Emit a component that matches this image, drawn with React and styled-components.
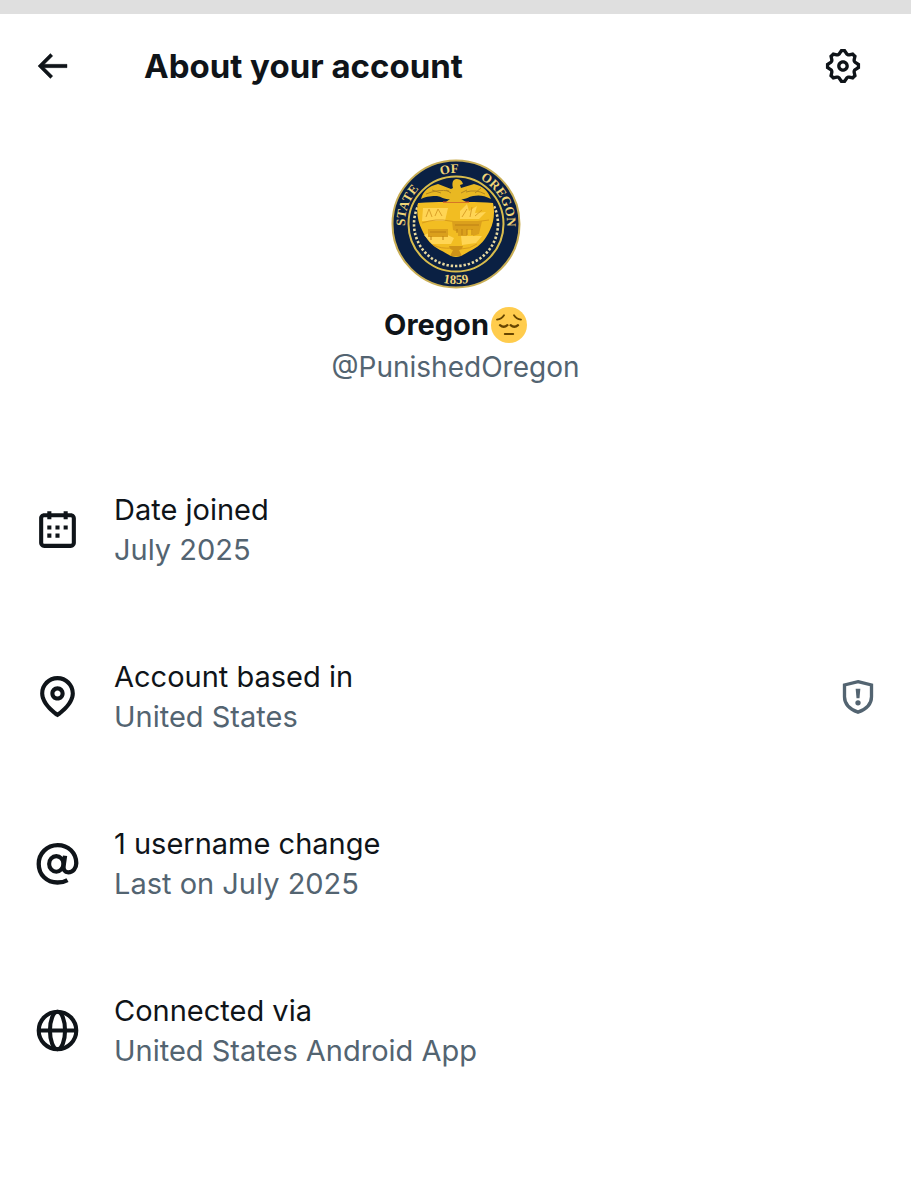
import styled, { createGlobalStyle } from "styled-components";

const GlobalStyle = createGlobalStyle`
    :root {
        --text: #0f1419;
        --textLight: #536471;
        --body: #ffffff;
        --statusBar: #dfdfdf;
        --navy: #0a2043;
        --gold: #e9b822;
    }

    body {
        margin: 0;
        background-color: var(--body);
        color: var(--text);
        font-family: Inter, "Liberation Sans", sans-serif;
    }
`

const StatusBar = styled.div`
    height: 14px;
    background-color: var(--statusBar);
`

const Header = styled.header`
    display: flex;
    align-items: center;
    height: 104px;
    padding: 0 48px 0 32px;
`

const Title = styled.h1`
    flex: 1;
    margin: 0 0 0 72px;
    font-size: 33px;
    font-weight: 700;
    line-height: 40px;
`

const IconButton = styled.button`
    display: flex;
    padding: 0;
    border: none;
    background: none;
    color: ${({ $muted }) => $muted ? "var(--textLight)" : "var(--text)"};
    cursor: pointer;
`

const Icon = styled.svg`
    flex: none;
    width: ${({ $size }) => $size}px;
    height: ${({ $size }) => $size}px;
    fill: currentColor;
`

const Line = styled(Icon)`
    fill: none;
    stroke: currentColor;
    stroke-width: 2;
`

const Profile = styled.section`
    display: flex;
    flex-direction: column;
    align-items: center;
    padding: 41px 0 58px;
`

const Seal = styled.svg`
    width: 130px;
    height: 130px;
    margin-bottom: 15px;
    font-family: "Liberation Serif", serif;
    font-weight: 700;
    font-size: 13px;
`

const Name = styled.h2`
    display: flex;
    align-items: center;
    gap: 2px;
    margin: 0;
    font-size: 29px;
    font-weight: 700;
    line-height: 42px;
`

const Handle = styled.p`
    margin: 0;
    color: var(--textLight);
    font-size: 28px;
    line-height: 42px;
`

const List = styled.ul`
    margin: 0;
    padding: 0;
    list-style: none;
`

const Item = styled.li`
    display: flex;
    align-items: center;
    gap: 32px;
    min-height: 167px;
    padding: 0 33px;
`

const ItemText = styled.div`
    flex: 1;
    font-size: 29px;
    line-height: 40px;
`

const Label = styled.div`
    color: var(--text);
`

const Value = styled.div`
    color: var(--textLight);
`

const BackIcon = () => <Icon $size={40} viewBox="0 0 24 24" aria-hidden="true">
    <path d="M7.414 13l5.043 5.04-1.414 1.42L3.586 12l7.457-7.46 1.414 1.42L7.414 11H21v2H7.414z" stroke="currentColor" strokeWidth=".25" />
</Icon>

const SettingsIcon = () => <Icon $size={40} viewBox="0 0 24 24" aria-hidden="true">
    <path d="M10.54 1.75h2.92l1.57 2.36c.11.17.32.25.53.21l2.53-.59 2.17 2.17-.58 2.54c-.05.2.04.41.21.53l2.36 1.57v2.92l-2.36 1.57c-.17.12-.26.33-.21.53l.58 2.54-2.17 2.17-2.53-.59c-.21-.04-.42.04-.53.21l-1.57 2.36h-2.92l-1.58-2.36c-.11-.17-.32-.25-.52-.21l-2.54.59-2.17-2.17.58-2.54c.05-.2-.03-.41-.21-.53l-2.35-1.57v-2.92L4.1 8.97c.18-.12.26-.33.21-.53L3.73 5.9 5.9 3.73l2.54.59c.2.04.41-.04.52-.21l1.58-2.36zm1.07 2l-.98 1.47C10.05 6.08 9 6.5 7.99 6.27l-1.46-.34-.6.6.33 1.46c.24 1.01-.18 2.07-1.05 2.64l-1.46.98v.78l1.46.98c.87.57 1.29 1.63 1.05 2.64l-.33 1.46.6.6 1.46-.34c1.01-.23 2.06.19 2.64 1.05l.98 1.47h.78l.97-1.47c.58-.86 1.63-1.28 2.65-1.05l1.45.34.61-.6-.34-1.46c-.23-1.01.18-2.07 1.05-2.64l1.47-.98v-.78l-1.47-.98c-.87-.57-1.28-1.63-1.05-2.64l.34-1.46-.61-.6-1.45.34c-1.02.23-2.07-.19-2.65-1.05l-.97-1.47h-.78zM12 10.5c-.83 0-1.5.67-1.5 1.5s.67 1.5 1.5 1.5c.82 0 1.5-.67 1.5-1.5s-.68-1.5-1.5-1.5zM8.5 12c0-1.93 1.56-3.5 3.5-3.5 1.93 0 3.5 1.57 3.5 3.5s-1.57 3.5-3.5 3.5c-1.94 0-3.5-1.57-3.5-3.5z" />
</Icon>

const CalendarIcon = () => <Icon $size={49} viewBox="0 0 24 24" aria-hidden="true">
    <path d="M7 4V3h2v1h6V3h2v1h1.5C19.89 4 21 5.12 21 6.5v12c0 1.38-1.11 2.5-2.5 2.5h-13C4.12 21 3 19.88 3 18.5v-12C3 5.12 4.12 4 5.5 4H7zm0 2H5.5c-.27 0-.5.22-.5.5v12c0 .28.23.5.5.5h13c.28 0 .5-.22.5-.5v-12c0-.28-.22-.5-.5-.5H17v1h-2V6H9v1H7V6zm0 6h2v-2H7v2zm0 4h2v-2H7v2zm4-4h2v-2h-2v2zm0 4h2v-2h-2v2zm4-4h2v-2h-2v2z" />
</Icon>

const PinIcon = () => <Icon $size={49} viewBox="0 0 24 24" aria-hidden="true">
    <path d="M12 7c-1.93 0-3.5 1.57-3.5 3.5S10.07 14 12 14s3.5-1.57 3.5-3.5S13.93 7 12 7zm0 5c-.827 0-1.5-.673-1.5-1.5S11.173 9 12 9s1.5.673 1.5 1.5S12.827 12 12 12zm0-10c-4.687 0-8.5 3.813-8.5 8.5 0 5.967 7.621 11.116 7.945 11.332l.555.37.555-.37c.324-.216 7.945-5.365 7.945-11.332C20.5 5.813 16.687 2 12 2zm0 17.77c-1.665-1.241-6.5-5.196-6.5-9.27C5.5 6.916 8.416 4 12 4s6.5 2.916 6.5 6.5c0 4.073-4.835 8.028-6.5 9.27z" />
</Icon>

const AtIcon = () => <Line $size={49} viewBox="0 0 24 24" aria-hidden="true">
    <ellipse cx="11.4" cy="12.2" rx="3.5" ry="3.8" />
    <path d="M15.7 8.2l-.7 4.9c-.3 2 .6 3.2 2.3 3.2 2.3 0 3.9-2 3.9-4.4 0-5.1-3.900-8.900-9.100-8.900-5.300 0-9.300 4.1-9.300 9.200 0 5.300 3.900 9.100 9.200 9.100 1.900 0 3.500-.4 4.900-1.200" strokeWidth="2.1" />
</Line>

const GlobeIcon = () => <Line $size={49} viewBox="0 0 24 24" aria-hidden="true">
    <circle cx="12" cy="12" r="9.2" />
    <ellipse cx="12" cy="12" rx="3.7" ry="9.2" />
    <path d="M2.8 12h18.4" />
</Line>

const ShieldIcon = () => <Line $size={40} viewBox="0 0 24 24" aria-hidden="true">
    <path d="M12 2.8l8.1 2v7c0 4.500-3.200 7.500-8.100 9.300-4.900-1.800-8.100-4.800-8.100-9.300v-7z" />
    <path d="M10.6 7h2.800l-.5 5.700h-1.800z" fill="currentColor" stroke="none" />
    <circle cx="12" cy="15.5" r="1.6" fill="currentColor" stroke="none" />
</Line>

const PensiveFace = () => <Icon $size={36} viewBox="0 0 36 36" role="img" aria-label="pensive face">
    <circle cx="18" cy="18" r="18" fill="#ffcc4d" />
    <g fill="none" stroke="#664500" strokeLinecap="round">
        <path d="M6 12.600q4.800-.6 7-4.300M30 12.600q-4.800-.6-7-4.300" strokeWidth="1.800" />
        <path d="M9 18.200q3.700 3.200 7.400 0M19.600 18.200q3.700 3.200 7.400 0" strokeWidth="2.300" />
        <path d="M13.900 27h8.200" strokeWidth="2.200" />
    </g>
</Icon>

const OregonSeal = () => <Seal viewBox="0 0 130 130" role="img" aria-label="State of Oregon seal">
    <defs>
        <path id="sealTop" d="M14 65a51 51 0 0 1 102 0" />
        <path id="sealLeft" d="M15 75A51 51 0 0 1 65 14" />
        <path id="sealRight" d="M65 14A51 51 0 0 1 115 75" />
        <path id="sealBottom" d="M5 65a60 60 0 0 0 120 0" />
    </defs>
    <circle cx="65" cy="65" r="63.500" fill="var(--navy)" stroke="#c9ae55" strokeWidth="2" />
    <circle cx="65" cy="65" r="42" fill="none" stroke="#e8d9a0" strokeWidth="2.600" strokeDasharray="2.400 1.900" />
    <path d="M24 41C28 25 46 19 65 19s37 6 41 22l-6 12H30z" fill="var(--navy)" />
    <circle cx="65" cy="65" r="47.500" fill="none" stroke="#d9bd4d" strokeWidth="2" />
    <path d="M27 44c10-1 19-1 27-1h23c8 0 17 0 25 1 2 9 1 19-3 27-4 9-10 16-18 20-6 3-11 7-16 7s-10-4-16-7c-8-4-14-11-18-20-4-8-6-18-4-27z" fill="#f2bd22" />
    <g fill="#ffd554">
        <path d="M32 49h25l-3 13H31zM69 52l7-7 2 7 8-5-2 7 11-1-7 7H69z" />
        <path d="M33 76q12-6 30 3l-3 6H41zM70 77h21l-6 7-14 2z" />
    </g>
    <g fill="none" stroke="#d0901a" opacity=".75">
        <path d="M31 64q14-5 28-2t39-1M35 58l3-8 3 8m3-1l3-7 4 7M71 58l5-8m3 8l2-10m3 9l7-6" />
        <path d="M42 86q8 4 19 3M70 90q9 0 16-5" />
    </g>
    <path d="M37 70h20v8H37zM61 62h30l-3 13-6 2v-6h-6v6h-9v-4l-5-2z" fill="#dba01c" />
    <path d="M39 73h16M40 77v4m12-4v4M64 66h24M66 70v4m5-4v6m5-6v6m5-6v6" stroke="#bd8015" fill="none" />
    <path d="M58 87h14q-1 4-4 4l3 6H59l3-6q-3 0-4-4z" fill="#cf9318" />
    <path d="M52 43h26" stroke="#c4472b" strokeWidth="1.200" />
    <path d="M30 40c2-8 8-13 17-15l13 5 2-1c-1-4-1-8 3-9 3 0 6 1 7 5l-3 1 1 3 13-4c9 2 14 7 17 15-7-4-13-4-18-3s-8 4-12 3l5 3H55l4-3c-5 1-8-2-13-3-5 0-10 0-16 3z" fill="var(--gold)" />
    <path d="M35 35q12-5 23-3M41 31l9 3M75 33q10-3 19 2M84 34l6-5M60 34l-5-3M70 34l6-3" fill="none" stroke="#b3871e" />
    <g fill="#f0d477">
        <text><textPath href="#sealLeft" startOffset="8">STATE</textPath></text>
        <text textAnchor="middle"><textPath href="#sealTop" startOffset="46%">OF</textPath></text>
        <text><textPath href="#sealRight" startOffset="25">OREGON</textPath></text>
        <text textAnchor="middle"><textPath href="#sealBottom" startOffset="50%">1859</textPath></text>
    </g>
</Seal>

const Detail = ({ icon, label, value, action }) => <Item>
    {icon}
    <ItemText>
        <Label>{label}</Label>
        <Value>{value}</Value>
    </ItemText>
    {action}
</Item>

const App = () => {
    return(
        <>
            <GlobalStyle />
            <StatusBar />
            <Header>
                <IconButton aria-label="Back"><BackIcon /></IconButton>
                <Title>About your account</Title>
                <IconButton aria-label="Settings"><SettingsIcon /></IconButton>
            </Header>
            <main>
                <Profile>
                    <OregonSeal />
                    <Name>Oregon<PensiveFace /></Name>
                    <Handle>@PunishedOregon</Handle>
                </Profile>
                <List>
                    <Detail icon={<CalendarIcon />} label="Date joined" value="July 2025" />
                    <Detail
                        icon={<PinIcon />}
                        label="Account based in"
                        value="United States"
                        action={<IconButton $muted aria-label="Location notice"><ShieldIcon /></IconButton>}
                    />
                    <Detail icon={<AtIcon />} label="1 username change" value="Last on July 2025" />
                    <Detail icon={<GlobeIcon />} label="Connected via" value="United States Android App" />
                </List>
            </main>
        </>
    )
}

export default App
